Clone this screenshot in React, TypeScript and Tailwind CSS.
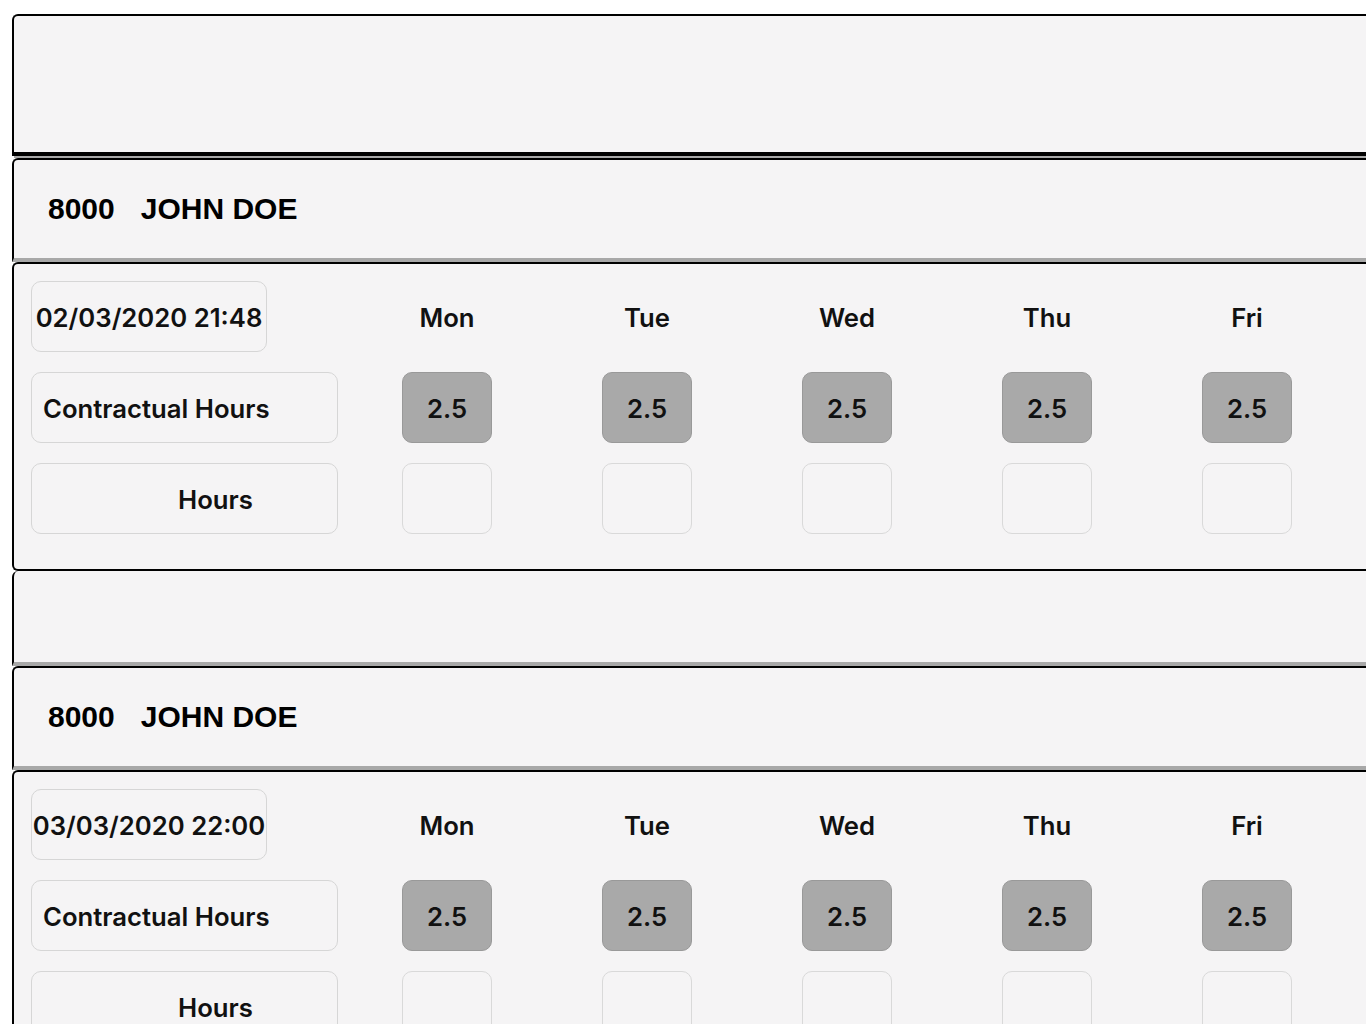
import React from 'react';

const days = ['Mon', 'Tue', 'Wed', 'Thu', 'Fri'];

type Entry = { id: string; name: string; stamp: string; hours: string[] };

const entries: Entry[] = [
  { id: '8000', name: 'JOHN DOE', stamp: '02/03/2020 21:48', hours: ['2.5', '2.5', '2.5', '2.5', '2.5'] },
  { id: '8000', name: 'JOHN DOE', stamp: '03/03/2020 22:00', hours: ['2.5', '2.5', '2.5', '2.5', '2.5'] },
];

const cardFont = { fontFamily: 'Inter, "Noto Sans", sans-serif' };

function Header({ id, name }: { id: string; name: string }) {
  return (
    <div className="h-[104px] border-t-2 border-l-2 border-b-4 border-t-black border-l-black border-b-[#a8a8a8] rounded-tl-md bg-[#f5f4f5] flex items-center pl-[34px]">
      <span className="font-['Liberation_Sans',Arial,sans-serif] font-bold text-[30px] text-black leading-none">
        {id}
        <span className="inline-block w-[26px]" />
        {name}
      </span>
    </div>
  );
}

function HoursCard({ entry }: { entry: Entry }) {
  return (
    <div
      className="border-t-2 border-l-2 border-b-2 border-black rounded-l-md bg-[#f5f4f5] pt-[17px] pb-[35px] pl-[17px]"
      style={cardFont}
    >
      <div className="grid grid-cols-[316px_repeat(5,200px)] grid-rows-[71px_71px_71px] gap-y-[20px] text-[#111] font-semibold text-[25.7px] leading-none">
        <div className="w-[236px] h-[71px] border-[1.5px] border-[#d6d6d6] rounded-[10px] flex items-center justify-center pt-[2px] whitespace-nowrap">
          {entry.stamp}
        </div>
        {days.map((d) => (
          <div key={d} className="flex items-center justify-center pt-[2px]">
            {d}
          </div>
        ))}

        <div className="w-[307px] h-[71px] border-[1.5px] border-[#d6d6d6] rounded-[10px] flex items-center pl-[11px] pt-[2px]">
          Contractual Hours
        </div>
        {entry.hours.map((h, i) => (
          <div key={i} className="flex items-center justify-center">
            <div className="w-[90px] h-[71px] bg-[#a9a9a9] border border-[#999] rounded-[10px] flex items-center justify-center pt-[2px]">
              {h}
            </div>
          </div>
        ))}

        <div className="w-[307px] h-[71px] border-[1.5px] border-[#d6d6d6] rounded-[10px] flex items-center pl-[146px] pt-[2px]">
          Hours
        </div>
        {days.map((d) => (
          <div key={d} className="flex items-center justify-center">
            <div className="w-[90px] h-[71px] border-[1.5px] border-[#d9d9d9] rounded-[10px]" />
          </div>
        ))}
      </div>
    </div>
  );
}

export default function App() {
  return (
    <div className="w-full min-h-screen bg-white overflow-hidden pt-[14px] pl-[12px]">
      <div className="w-[1420px]">
        {entries.map((e, i) => (
          <div key={i}>
            {i === 0 ? (
              <>
                <div className="h-[142px] border-t-2 border-l-2 border-b-4 border-black rounded-tl-md bg-[#f5f4f5]" />
                <div className="h-[2px] bg-[#a8a8a8] ml-[2px]" />
              </>
            ) : (
              <div className="h-[95px] border-l-2 border-b-4 border-l-black border-b-[#a8a8a8] rounded-tl-md bg-[#f5f4f5]" />
            )}
            <Header id={e.id} name={e.name} />
            <HoursCard entry={e} />
          </div>
        ))}
      </div>
    </div>
  );
}
